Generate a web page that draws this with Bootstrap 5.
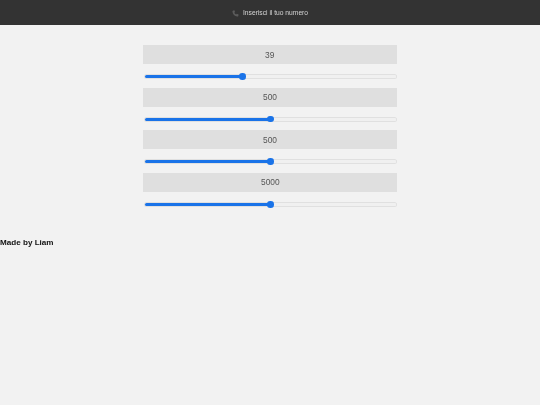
<!DOCTYPE html>
<html lang="it">
<head>
<meta charset="utf-8">
<title>Inserisci il tuo numero</title>
<link href="https://cdn.jsdelivr.net/npm/bootstrap@5.3.0/dist/css/bootstrap.min.css" rel="stylesheet">
<style>
html, body { height: 100%; }
body { background: #f2f2f2; font-family: "Liberation Sans", Arial, sans-serif; line-height: 1.2; overflow: hidden; }
.topbar { background: #333; height: 25px; color: #d6d6d6; font-size: 6.7px; padding-top: 1px; }
.topbar span, .valuebox span, .credit { will-change: transform; }
.stack { width: 254px; padding-top: 20.2px; }
.valuebox { background: #dfdfdf; color: #555; height: 19px; font-size: 8.4px; }
.sliderwrap { height: 23.6px; padding: 1px 1px 0 2px; }
.rng { -webkit-appearance: none; appearance: none; display: block; width: 100%; height: 3px; margin: 0; border: 0; border-radius: 2px; background: linear-gradient(to right, #1a73e8 var(--pct), #f0f0f0 var(--pct)); box-shadow: 0 0 0 1px #e0e0e0; }
.rng::-webkit-slider-thumb { -webkit-appearance: none; appearance: none; width: 6.5px; height: 6.5px; border-radius: 50%; background: #1a73e8; border: 0; }
.credit { font-size: 8.1px; color: #111; margin-top: 22px; }
</style>
</head>
<body>
<nav class="topbar d-flex align-items-center justify-content-center gap-1">
  <svg width="7" height="7" viewBox="0 0 16 16" aria-hidden="true"><path fill="#5c5c5c" d="M3 1 5.5.6 7 4.6 5.2 6.2c.8 1.800 2.300 3.300 4.300 4.300L11 8.800l4 1.600-.4 2.500c-.3 1.300-1.500 2.200-2.800 2C6 14.200 1.800 10 1 4c-.2-1.300.7-2.700 2-3Z"/></svg>
  <span>Inserisci il tuo numero</span>
</nav>
<main class="stack mx-auto">
  <div class="valuebox d-flex align-items-center justify-content-center"><span>39</span></div>
  <div class="sliderwrap d-flex align-items-center"><input class="rng" type="range" min="0" max="100" value="38.5" step="0.5" style="--pct:38.5%" aria-label="Valore 1"></div>
  <div class="valuebox d-flex align-items-center justify-content-center"><span>500</span></div>
  <div class="sliderwrap d-flex align-items-center"><input class="rng" type="range" min="0" max="1000" value="500" style="--pct:50%" aria-label="Valore 2"></div>
  <div class="valuebox d-flex align-items-center justify-content-center"><span>500</span></div>
  <div class="sliderwrap d-flex align-items-center"><input class="rng" type="range" min="0" max="1000" value="500" style="--pct:50%" aria-label="Valore 3"></div>
  <div class="valuebox d-flex align-items-center justify-content-center"><span>5000</span></div>
  <div class="sliderwrap d-flex align-items-center"><input class="rng" type="range" min="0" max="10000" value="5000" style="--pct:50%" aria-label="Valore 4"></div>
</main>
<p class="credit fw-bold mb-0">Made by Liam</p>
<script src="https://cdn.jsdelivr.net/npm/bootstrap@5.3.0/dist/js/bootstrap.bundle.min.js"></script>
</body>
</html>
